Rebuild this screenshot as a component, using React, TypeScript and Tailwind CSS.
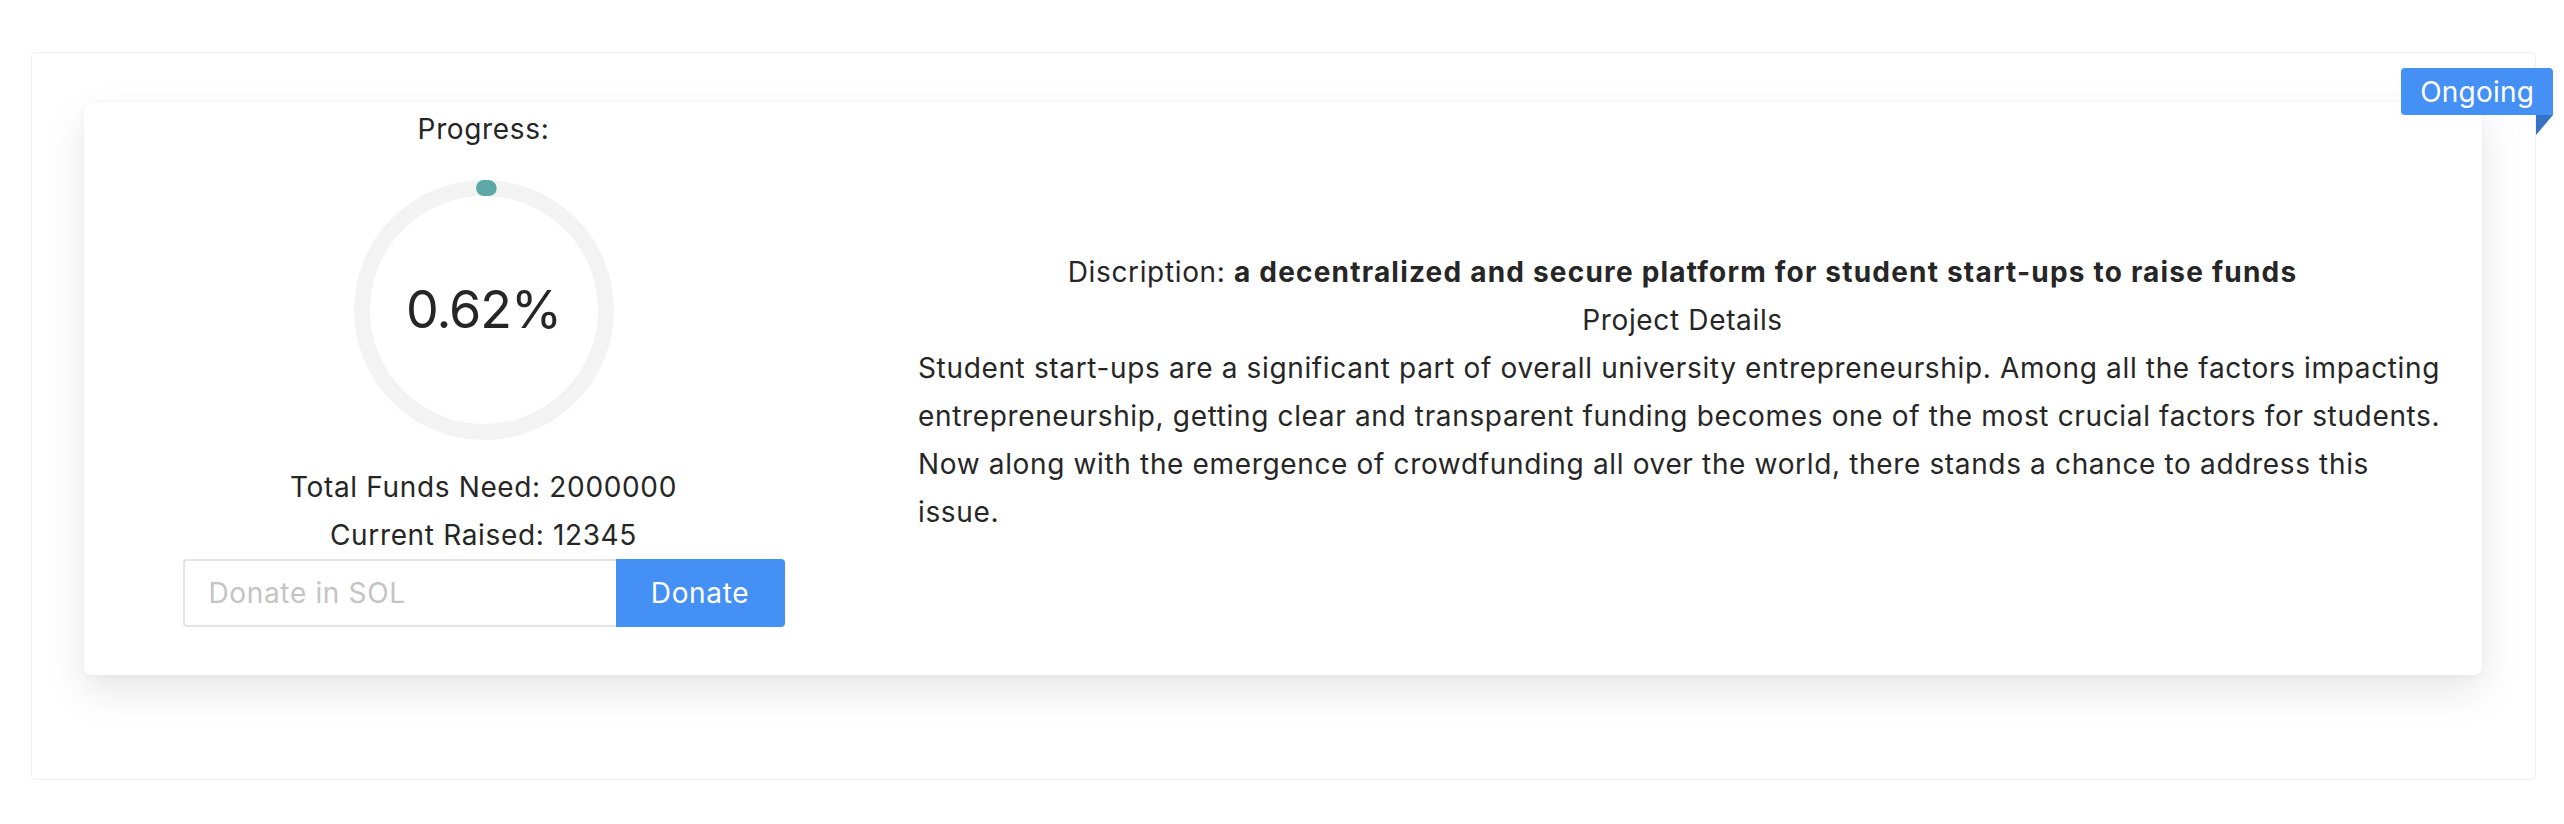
import React from "react";

function ProgressCircle({ percent }: { percent: number }) {
  const size = 260;
  const stroke = 16;
  const r = (size - stroke) / 2;
  const c = 2 * Math.PI * r;
  const len = (percent / 100) * c;
  return (
    <div className="relative w-[260px] h-[260px]">
      <svg width={size} height={size} viewBox={`0 0 ${size} ${size}`}>
        <circle cx={size / 2} cy={size / 2} r={r} fill="none" stroke="#f3f3f3" strokeWidth={stroke} />
        <circle
          cx={size / 2}
          cy={size / 2}
          r={r}
          fill="none"
          stroke="#5ba8a6"
          strokeWidth={stroke}
          strokeLinecap="round"
          strokeDasharray={`${len} ${c}`}
          transform={`rotate(-90 ${size / 2} ${size / 2})`}
        />
      </svg>
      <div className="absolute inset-0 flex items-center justify-center text-[52px] tracking-[-1px] text-[#262626] leading-none">
        0.62%
      </div>
    </div>
  );
}

export default function App() {
  return (
    <div
      className="w-full h-[824px] bg-white text-[#262626] text-[28px] leading-[48px] tracking-[0.65px]"
      style={{ fontFamily: "Inter, 'Noto Sans', sans-serif" }}
    >
      <div className="pl-[31px] pt-[52px] pr-[28px]">
        <div className="relative h-[728px] border border-[#f0f0f0] rounded-[4px] pl-[52px] pr-[53px] pt-[50px]">
          {/* ribbon */}
          <div className="absolute top-[15px] right-[-18px] flex flex-col items-end">
            <div className="h-[47px] px-[19px] bg-[#4590f5] text-white tracking-[0.2px] rounded-t-[4px] rounded-bl-[4px] flex items-center leading-none">
              Ongoing
            </div>
            <svg width="17" height="20" viewBox="0 0 17 20" className="block">
              <polygon points="0,0 17,0 0,20" fill="#3571c4" />
            </svg>
          </div>

          <div className="h-[572px] bg-white rounded-[8px] shadow-[0_16px_40px_rgba(0,0,0,0.10),0_2px_8px_rgba(0,0,0,0.03)] grid grid-cols-[799px_1fr]">
            <div className="flex flex-col items-center pt-[2px]">
              <div>Progress:</div>
              <div className="mt-[27px]">
                <ProgressCircle percent={0.62} />
              </div>
              <div className="mt-[23px]">Total Funds Need: 2000000</div>
              <div>Current Raised: 12345</div>
              <div className="flex w-[602px] h-[68px]">
                <input
                  placeholder="Donate in SOL"
                  className="flex-1 min-w-0 h-full border-2 border-r-0 border-[#e3e3e3] rounded-l-[4px] px-[24px] text-[28px] placeholder:text-[#c4c4c4] outline-none bg-white"
                />
                <button className="w-[169px] h-full bg-[#4590f5] text-white rounded-r-[4px] text-[28px]">
                  Donate
                </button>
              </div>
            </div>
            <div className="flex flex-col justify-center px-[35px] pt-[5px]">
              <div className="text-center whitespace-nowrap">
                Discription:{" "}
                <span className="font-bold tracking-[1.2px]">
                  a decentralized and secure platform for student start-ups to raise funds
                </span>
              </div>
              <div className="text-center">Project Details</div>
              <p className="whitespace-nowrap">
                Student start-ups are a significant part of overall university entrepreneurship. Among all the factors impacting
                <br />
                entrepreneurship, getting clear and transparent funding becomes one of the most crucial factors for students.
                <br />
                Now along with the emergence of crowdfunding all over the world, there stands a chance to address this
                <br />
                issue.
              </p>
            </div>
          </div>
        </div>
      </div>
    </div>
  );
}
